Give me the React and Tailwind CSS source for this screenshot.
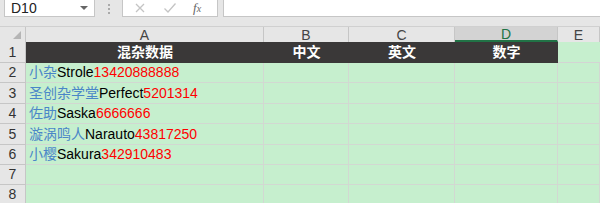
import { ChevronDown } from "lucide-react";

const cols = [
  { key: "A", w: "w-[238px]" },
  { key: "B", w: "w-[85px]" },
  { key: "C", w: "w-[106px]" },
  { key: "D", w: "w-[103px]" },
  { key: "E", w: "flex-1" },
];

const heights = ["h-[21px]", "h-[20px]", "h-[21px]", "h-[20px]", "h-[21px]", "h-[20px]", "h-[20px]", "h-[20px]"];

const data = [
  ["小杂", "Strole", "13420888888"],
  ["圣创杂学堂", "Perfect", "5201314"],
  ["佐助", "Saska", "6666666"],
  ["漩涡鸣人", "Narauto", "43817250"],
  ["小樱", "Sakura", "342910483"],
];

const font = { fontFamily: '"Liberation Sans", "Noto Sans CJK SC", sans-serif' };

function FormulaBar() {
  return (
    <div className="flex h-[26px] bg-[#e6e6e6] items-start">
      <div className="ml-[4px] w-[91px] h-[17px] bg-white border-b border-x border-[#c6c6c6] flex items-center justify-between px-[6px] text-[14px] text-[#222]">
        <span>D10</span>
        <span className="w-0 h-0 border-x-[4px] border-x-transparent border-t-[4px] border-t-[#666]" />
      </div>
      <div className="w-[27px] h-[17px] flex flex-col items-center justify-center gap-[2px]">
        <span className="w-[2px] h-[2px] bg-[#aaa]" />
        <span className="w-[2px] h-[2px] bg-[#aaa]" />
        <span className="w-[2px] h-[2px] bg-[#aaa]" />
      </div>
      <div className="w-[96px] h-[17px] bg-white border-b border-x border-[#c6c6c6] flex items-center text-[#c4c4c4]">
        <svg width="12" height="12" viewBox="0 0 12 12" className="ml-[11px]">
          <path d="M2 2 L10 10 M10 2 L2 10" stroke="#c4c4c4" strokeWidth="1.3" fill="none" />
        </svg>
        <svg width="14" height="12" viewBox="0 0 14 12" className="ml-[17px]">
          <path d="M1.5 6.5 L5 10 L12.5 1.5" stroke="#c4c4c4" strokeWidth="1.3" fill="none" />
        </svg>
        <span className="ml-[16px] text-[13px] italic text-[#666]" style={{ fontFamily: '"Liberation Serif", serif' }}>
          f<span className="text-[10px]">x</span>
        </span>
      </div>
      <div className="ml-[5px] flex-1 h-[17px] bg-white border-b border-l border-[#c6c6c6]" />
    </div>
  );
}

function ColumnHeaders() {
  return (
    <div className="flex h-[16px] bg-[#e6e6e6] border-t border-[#d0d0d0]">
      <div className="w-[26px] border-r border-[#c6c6c6] relative">
        <span className="absolute right-[4px] bottom-[3px] w-0 h-0 border-l-[8px] border-l-transparent border-b-[8px] border-b-[#b5b5b5]" />
      </div>
      {cols.map((c) => (
        <div
          key={c.key}
          className={`${c.w} flex items-center justify-center text-[14px] leading-none border-r ${
            c.key === "D"
              ? "bg-[#d3d3d3] text-[#217346] border-b-2 border-b-[#217346] border-r-[#c6c6c6]"
              : "text-[#444] border-[#c6c6c6]"
          }`}
        >
          {c.key}
        </div>
      ))}
    </div>
  );
}

function Row({ idx }) {
  const h = heights[idx];
  const rowNum = idx + 1;
  const rec = idx >= 1 && idx <= 5 ? data[idx - 1] : null;
  return (
    <div className={`flex ${h}`}>
      <div className="w-[26px] bg-[#e6e6e6] border-r border-b border-[#c6c6c6] flex items-center justify-center text-[14px] text-[#333]">
        {rowNum}
      </div>
      {idx === 0 ? (
        <>
          <div className="w-[238px] bg-[#3a3838] flex items-center justify-center text-white font-bold text-[14px]">混杂数据</div>
          <div className="w-[85px] bg-[#3a3838] flex items-center justify-center text-white font-bold text-[14px]">中文</div>
          <div className="w-[106px] bg-[#3a3838] flex items-center justify-center text-white font-bold text-[14px]">英文</div>
          <div className="w-[103px] bg-[#3a3838] flex items-center justify-center text-white font-bold text-[14px]">数字</div>
          <div className="flex-1 bg-[#c6efce] border-b border-[#d4d4d4]" />
        </>
      ) : (
        cols.map((c) => (
          <div
            key={c.key}
            className={`${c.w} bg-[#c6efce] border-r border-b border-[#d2d8d2] flex items-center text-[14px] whitespace-nowrap overflow-visible`}
          >
            {c.key === "A" && rec && (
              <span className="pl-[3px]">
                <span className="text-[#4a86c8]">{rec[0]}</span>
                <span className="text-black">{rec[1]}</span>
                <span className="text-[#ff0000]">{rec[2]}</span>
              </span>
            )}
          </div>
        ))
      )}
    </div>
  );
}

export default function App() {
  return (
    <div className="w-[600px] h-[203px] overflow-hidden bg-[#c6efce]" style={font}>
      <FormulaBar />
      <ColumnHeaders />
      {heights.map((_, i) => (
        <Row key={i} idx={i} />
      ))}
    </div>
  );
}
